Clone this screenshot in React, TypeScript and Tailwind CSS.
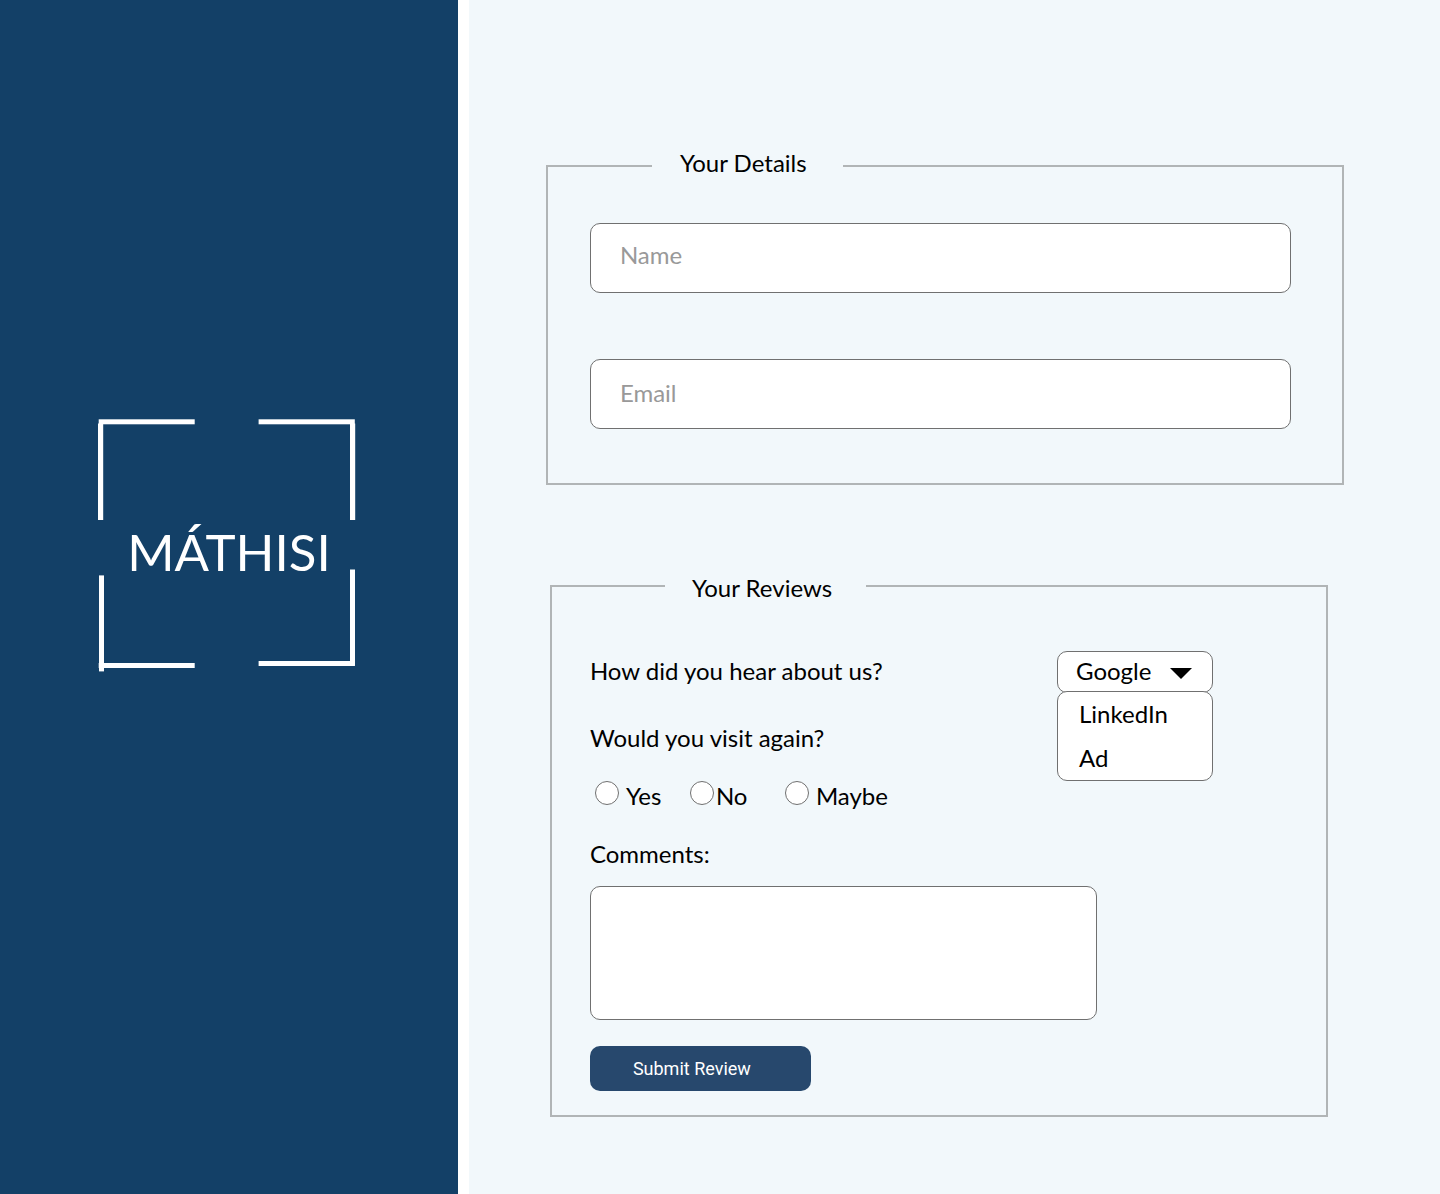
import React from "react";

const panelBorder = "min-w-0 border-2 border-[#b1b5b6]";
const fieldStyle =
  "block h-[70px] w-full rounded-[10px] border border-[#707070] bg-white pl-[29px] pr-7 text-2xl leading-[30px] text-black placeholder:text-[#999999] placeholder:opacity-100";

function Logo() {
  return (
    <div className="grid">
      <svg
        viewBox="0 0 258 254"
        className="col-start-1 row-start-1 h-[254px] w-[258px]"
        fill="#ffffff"
        aria-hidden="true"
      >
        <rect x="0.7" y="0.3" width="96" height="5" />
        <rect x="0" y="4.5" width="5.2" height="96.5" />
        <rect x="160.6" y="0.3" width="96.2" height="5" />
        <rect x="252" y="4.5" width="5.2" height="96.5" />
        <rect x="1" y="156.4" width="5" height="96" />
        <rect x="0.7" y="244" width="96" height="5" />
        <rect x="160.6" y="242" width="96.2" height="5" />
        <rect x="252" y="150.5" width="5" height="96.3" />
      </svg>
      <h1 className="col-start-1 row-start-1 place-self-center pl-1 pt-3 text-[51px] leading-[60px] text-white">
        MÁTHISI
      </h1>
    </div>
  );
}

function Choice({ label, gap }: { label: string; gap: string }) {
  return (
    <label className={`flex items-start ${gap}`}>
      <input
        type="radio"
        name="again"
        value={label}
        className="size-6 shrink-0 appearance-none rounded-full border border-[#707070] bg-white checked:border-[7px]"
      />
      <span>{label}</span>
    </label>
  );
}

function SourceSelect() {
  return (
    <div className="relative w-[156px] shrink-0">
      <select
        id="source"
        defaultValue="Google"
        className="block h-[42px] w-full appearance-none rounded-[10px] border border-[#707070] bg-white pb-0.5 pl-[18px] text-2xl leading-[30px] text-black"
      >
        <option>Google</option>
        <option>LinkedIn</option>
        <option>Ad</option>
      </select>
      <svg
        viewBox="0 0 22 11"
        className="pointer-events-none absolute right-[21px] top-[17px] h-[11px] w-[22px]"
        aria-hidden="true"
      >
        <path d="M0 0H22L11 11Z" fill="#000000" />
      </svg>
      <ul
        role="listbox"
        aria-label="Other sources"
        className="absolute left-0 top-10 flex w-full flex-col gap-3.5 rounded-[10px] border border-[#707070] bg-white py-[7px] pl-[21px]"
      >
        <li role="option" aria-selected="false">LinkedIn</li>
        <li role="option" aria-selected="false">Ad</li>
      </ul>
    </div>
  );
}

export default function App() {
  return (
    <div className="flex min-h-screen gap-[11px] bg-white font-['Lato',sans-serif] text-2xl leading-[30px] text-black">
      <aside className="flex w-[31.8%] shrink-0 items-center justify-center bg-[#134067] pb-[102px] pr-1">
        <Logo />
      </aside>

      <main className="min-w-0 flex-1 bg-[#f2f8fb] pb-[77px] pl-[77px] pr-24 pt-[148px]">
        <form>
          <fieldset className={`${panelBorder} pb-[54px] pl-[42px] pr-[51px]`}>
            <legend className="ml-[62px] pb-1.5 pl-7 pr-9">Your Details</legend>
            <div className="flex flex-col gap-[66px] pt-[39px]">
              <input type="text" aria-label="Name" placeholder="Name" className={`${fieldStyle} pb-2`} />
              <input type="email" aria-label="Email" placeholder="Email" className={`${fieldStyle} pb-1`} />
            </div>
          </fieldset>

          <fieldset className={`${panelBorder} ml-1 mr-4 mt-[84px] px-[38px] pb-6`}>
            <legend className="ml-[75px] pl-[27px] pr-[34px] pt-1">Your Reviews</legend>
            <div className="flex items-center justify-between pr-[75px] pt-12">
              <label htmlFor="source" className="pb-0.5">How did you hear about us?</label>
              <SourceSelect />
            </div>

            <div role="radiogroup" aria-labelledby="again-label" className="mt-[30px]">
              <p id="again-label">Would you visit again?</p>
              <div className="mt-7 flex pl-[5px]">
                <div className="w-[95px]">
                  <Choice label="Yes" gap="gap-[7px]" />
                </div>
                <div className="w-[95px]">
                  <Choice label="No" gap="gap-0.5" />
                </div>
                <Choice label="Maybe" gap="gap-[7px]" />
              </div>
            </div>

            <label htmlFor="comments" className="mt-7 block">
              Comments:
            </label>
            <textarea
              id="comments"
              className="mt-[17px] block h-[134px] w-full max-w-[507px] resize-none rounded-[10px] border border-[#707070] bg-white p-4"
            />
            <button
              type="submit"
              className="mt-[26px] block h-[45px] w-[221px] rounded-[10px] bg-[#27486d] pl-[43px] text-left font-['Roboto',sans-serif] text-lg leading-6 text-white"
            >
              Submit Review
            </button>
          </fieldset>
        </form>
      </main>
    </div>
  );
}
